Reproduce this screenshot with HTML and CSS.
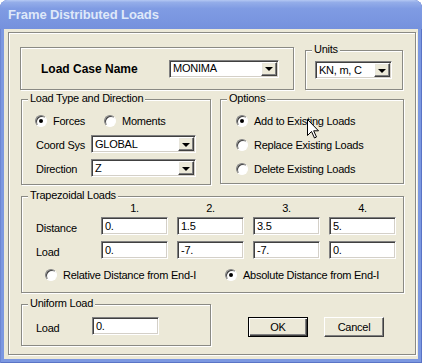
FILE: index.html
```html
<!DOCTYPE html>
<html lang="en">
<head>
    <meta charset="UTF-8">
    <title>Frame Distributed Loads</title>
    <link rel="stylesheet" href="styles.css">
</head>
<body>

<div class="window">
    <div class="titlebar">Frame Distributed Loads</div>
    <div class="client">
        <div class="frame">

            <!-- Load case and units -->
            <div class="row row-top">
                <div class="group case-group">
                    <span class="case-label">Load Case Name</span>
                    <div class="combo case-combo">
                        <span class="combo-text">MONIMA</span>
                        <span class="combo-btn"><i class="arrow"></i></span>
                    </div>
                </div>
                <div class="group units-group">
                    <span class="legend">Units</span>
                    <div class="combo units-combo">
                        <span class="combo-text">KN, m, C</span>
                        <span class="combo-btn"><i class="arrow"></i></span>
                    </div>
                </div>
            </div>

            <!-- Load type and options -->
            <div class="row row-mid">
                <div class="group type-group">
                    <span class="legend">Load Type and Direction</span>
                    <div class="radio-row">
                        <div class="radio-item forces"><span class="radio checked"></span>Forces</div>
                        <div class="radio-item"><span class="radio"></span>Moments</div>
                    </div>
                    <div class="field-row">
                        <span class="field-label">Coord Sys</span>
                        <div class="combo dir-combo">
                            <span class="combo-text">GLOBAL</span>
                            <span class="combo-btn"><i class="arrow"></i></span>
                        </div>
                    </div>
                    <div class="field-row">
                        <span class="field-label">Direction</span>
                        <div class="combo dir-combo">
                            <span class="combo-text">Z</span>
                            <span class="combo-btn"><i class="arrow"></i></span>
                        </div>
                    </div>
                </div>
                <div class="group options-group">
                    <span class="legend">Options</span>
                    <div class="radio-item option"><span class="radio checked"></span>Add to Existing Loads</div>
                    <div class="radio-item option"><span class="radio"></span>Replace Existing Loads</div>
                    <div class="radio-item option"><span class="radio"></span>Delete Existing Loads</div>
                    <svg class="cursor" width="13" height="20" viewBox="0 0 13 20">
                        <polygon points="0.5,0.5 0.5,16.5 4.5,12.5 7.5,19 9.5,18 6.7,11.8 11.5,11.8" fill="#fff" stroke="#000" stroke-width="1"/>
                    </svg>
                </div>
            </div>

            <!-- Trapezoidal loads -->
            <div class="group trap-group">
                <span class="legend">Trapezoidal Loads</span>
                <div class="trap-grid">
                    <span></span>
                    <span class="col-head">1.</span>
                    <span class="col-head">2.</span>
                    <span class="col-head">3.</span>
                    <span class="col-head">4.</span>

                    <span class="field-label">Distance</span>
                    <div class="textbox">0.</div>
                    <div class="textbox">1.5</div>
                    <div class="textbox">3.5</div>
                    <div class="textbox">5.</div>

                    <span class="field-label">Load</span>
                    <div class="textbox">0.</div>
                    <div class="textbox">-7.</div>
                    <div class="textbox">-7.</div>
                    <div class="textbox">0.</div>
                </div>
                <div class="radio-row trap-radios">
                    <div class="radio-item relative"><span class="radio"></span>Relative Distance from End-I</div>
                    <div class="radio-item"><span class="radio checked"></span>Absolute Distance from End-I</div>
                </div>
            </div>

            <!-- Uniform load and buttons -->
            <div class="row row-bottom">
                <div class="group uniform-group">
                    <span class="legend">Uniform Load</span>
                    <span class="field-label">Load</span>
                    <div class="textbox">0.</div>
                </div>
                <div class="buttons">
                    <div class="button default">OK</div>
                    <div class="button">Cancel</div>
                </div>
            </div>

        </div>
    </div>
</div>

</body>
</html>
```

FILE: styles.css
```css
* {
    box-sizing: border-box;
}
body {
    margin: 0;
    padding: 0;
    background-color: #fff;
    font-family: "Liberation Sans", Arial, sans-serif;
    font-size: 11px;
    letter-spacing: -0.25px;
    color: #000;
}
.window {
    width: 422px;
    height: 363px;
    padding: 0 4px 4px 4px;
    background-color: #7c98e1;
    border-radius: 8px 8px 0 0;
    box-shadow: inset 1px 0 0 #6d87d4, inset -1px 0 0 #5a74c6, inset 0 -1px 0 #5a74c6;
}
.titlebar {
    height: 29px;
    margin: 0 -4px;
    padding: 7px 0 0 8px;
    border-radius: 8px 8px 0 0;
    background: linear-gradient(180deg, #b4c8f3 0%, #94ade9 8%, #7f9be3 30%, #7a96e0 70%, #7591dd 100%);
    color: #dfe8f9;
    font-size: 13px;
    font-weight: bold;
    letter-spacing: -0.1px;
    line-height: 15px;
}
.client {
    height: 330px;
    padding: 3px 0 0 4px;
    background-color: #ece9d8;
}
.frame {
    width: 408px;
    height: 323px;
    padding: 14px 0 0 11px;
    border: 1px solid #8a8a84;
    box-shadow: inset 1px 1px 0 #fff, 1px 1px 0 #fff;
}
.row {
    display: flex;
}
.group {
    position: relative;
    border: 1px solid #8a8a84;
    box-shadow: inset 1px 1px 0 #fff, 1px 1px 0 #fff;
}
.legend {
    position: absolute;
    top: -8px;
    left: 6px;
    padding: 0 2px;
    line-height: 13px;
    background-color: #ece9d8;
}

/* sunken fields */
.combo, .textbox {
    display: flex;
    height: 18px;
    background-color: #fff;
    border: 1px solid;
    border-color: #808080 #fff #fff #808080;
    box-shadow: inset 1px 1px 0 #404040, inset -1px -1px 0 #d4d0c8;
    padding: 2px 2px 0 3px;
    line-height: 13px;
}
.combo {
    padding: 1px 1px 1px 3px;
    align-items: center;
}
.combo-text {
    flex: 1;
    line-height: 13px;
}
.combo-btn {
    display: flex;
    align-items: center;
    justify-content: center;
    width: 16px;
    height: 14px;
    background-color: #ece9d8;
    border: 1px solid;
    border-color: #fff #404040 #404040 #fff;
    box-shadow: inset -1px -1px 0 #808080, inset 1px 1px 0 #e8e6dc;
}
.arrow {
    width: 0;
    height: 0;
    margin-top: 1px;
    border-left: 4px solid transparent;
    border-right: 4px solid transparent;
    border-top: 4px solid #000;
}

/* radios */
.radio-item {
    display: flex;
    align-items: center;
    height: 16px;
}
.radio {
    width: 12px;
    height: 12px;
    margin-right: 6px;
    border-radius: 50%;
    background-color: #fff;
    border: 1px solid;
    border-color: #808080 #fff #fff #808080;
    box-shadow: inset 1px 1px 0 #404040;
    display: flex;
    align-items: center;
    justify-content: center;
}
.radio.checked::after {
    content: "";
    width: 4px;
    height: 4px;
    border-radius: 50%;
    background-color: #000;
}
.radio-row {
    display: flex;
}

/* load case row */
.case-group {
    width: 274px;
    height: 43px;
    display: flex;
    align-items: center;
    padding-left: 20px;
}
.case-label {
    width: 128px;
    font-size: 12px;
    font-weight: bold;
    letter-spacing: 0;
}
.case-combo {
    width: 110px;
}
.units-group {
    width: 98px;
    height: 40px;
    margin: 3px 0 0 11px;
    padding: 10px 0 0 9px;
}
.units-combo {
    width: 77px;
}

/* load type / options row */
.row-mid {
    margin: 9px 0 0 1px;
}
.type-group {
    width: 190px;
    height: 86px;
    padding: 13px 0 0 13px;
}
.forces {
    width: 69px;
}
.field-row {
    display: flex;
    align-items: center;
    margin-top: 6px;
}
.field-label {
    width: 56px;
    padding-top: 2px;
}
.type-group .field-label {
    padding-left: 1px;
}
.dir-combo {
    width: 105px;
}
.options-group {
    width: 184px;
    height: 85px;
    margin-left: 9px;
    padding: 13px 0 0 15px;
}
.option + .option {
    margin-top: 8px;
}
.cursor {
    position: absolute;
    left: 86px;
    top: 19px;
}

/* trapezoidal */
.trap-group {
    width: 383px;
    height: 97px;
    margin: 11px 0 0 1px;
    padding: 5px 0 0 14px;
}
.trap-grid {
    display: grid;
    grid-template-columns: 56px 67px 67px 67px 67px;
    grid-template-rows: 15px 24px 18px;
    column-gap: 9px;
}
.col-head {
    text-align: center;
    line-height: 13px;
}
.trap-grid .field-label {
    line-height: 18px;
}
.trap-grid .textbox {
    height: 18px;
}
.trap-radios {
    margin: 8px 0 0 9px;
}
.relative {
    width: 180px;
}

/* bottom row */
.row-bottom {
    margin: 11px 0 0 1px;
}
.uniform-group {
    width: 190px;
    height: 42px;
    display: flex;
    align-items: flex-start;
    padding: 12px 0 0 14px;
}
.uniform-group .field-label {
    line-height: 18px;
}
.uniform-group .textbox {
    width: 67px;
}
.buttons {
    display: flex;
    gap: 16px;
    margin: 13px 0 0 37px;
}
.button {
    width: 60px;
    height: 20px;
    display: flex;
    align-items: center;
    justify-content: center;
    background-color: #ece9d8;
    border: 1px solid;
    border-color: #fff #404040 #404040 #fff;
    box-shadow: inset -1px -1px 0 #808080;
}
.button.default {
    border: 1px solid #000;
    box-shadow: inset 1px 1px 0 #fff, inset -1px -1px 0 #404040, inset -2px -2px 0 #808080;
}
```
